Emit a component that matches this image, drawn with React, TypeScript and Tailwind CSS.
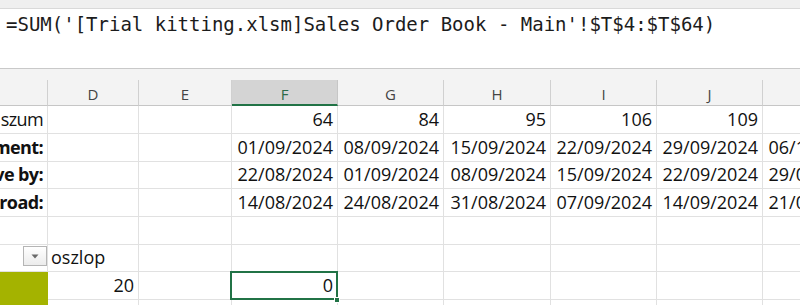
import React from "react";

const cols = ["C", "D", "E", "F", "G", "H", "I", "J", "K"];

type Cell = { t?: string; align?: "l" | "r"; bold?: boolean; label?: boolean };

const dates2 = ["01/09/2024", "08/09/2024", "15/09/2024", "22/09/2024", "29/09/2024", "06/10/2024"];
const dates3 = ["22/08/2024", "01/09/2024", "08/09/2024", "15/09/2024", "22/09/2024", "29/09/2024"];
const dates4 = ["14/08/2024", "24/08/2024", "31/08/2024", "07/09/2024", "14/09/2024", "21/09/2024"];
const nums = ["64", "84", "95", "106", "109", ""];

function rowFrom(label: string, bold: boolean, vals: string[]): Cell[] {
  return [
    { t: label, align: "r", bold, label: true },
    {},
    {},
    ...vals.map((v) => ({ t: v, align: "r" as const })),
  ];
}

const rows: { h: string; cells: Cell[] }[] = [
  { h: "h-[28px]", cells: rowFrom("szum", false, nums) },
  { h: "h-[28px]", cells: rowFrom("ment:", true, dates2) },
  { h: "h-[27px]", cells: rowFrom("ve by:", true, dates3) },
  { h: "h-[28px]", cells: rowFrom("road:", true, dates4) },
  { h: "h-[28px]", cells: rowFrom("", false, ["", "", "", "", "", ""]) },
];

const gridCols =
  "grid grid-cols-[48px_91px_93px_106px_106px_107px_106px_106px_106px]";

export default function App() {
  return (
    <div
      className="w-[800px] h-[305px] overflow-hidden bg-white text-[#111]"
      style={{ fontFamily: "'Open Sans', 'Noto Sans', sans-serif" }}
    >
      {/* top strip */}
      <div className="h-[9px] bg-[#efefef] border-b border-[#d9d9d9]" />
      {/* formula bar */}
      <div className="h-[60px] bg-white border-b border-[#c9c9c9] pl-[6px] pt-[4px]">
        <div
          className="text-[19px] leading-[22px] text-[#1c1c1c] whitespace-nowrap"
          style={{ fontFamily: "'DejaVu Sans Mono', 'Liberation Mono', monospace" }}
        >
          =SUM('[Trial kitting.xlsm]Sales Order Book - Main'!$T$4:$T$64)
        </div>
      </div>
      {/* gap */}
      <div className="h-[11px] bg-[#f3f3f3]" />
      {/* column headers */}
      <div className={`${gridCols} h-[26px] bg-[#f3f3f3]`}>
        {cols.map((c) => (
          <div
            key={c}
            className={
              c === "F"
                ? "flex items-end justify-center bg-[#d4d4d4] border-r border-[#c6c6c6] border-b-2 border-b-[#217346] text-[#2b6a47] text-[15px] leading-[18px] pb-[1px]"
                : "flex items-end justify-center border-b border-[#c6c6c6] border-r border-r-[#d0d0d0] text-[#444] text-[15px] leading-[18px] pb-[2px]"
            }
          >
            {c === "C" || c === "K" ? "" : c}
          </div>
        ))}
      </div>
      {/* data rows */}
      {rows.map((r, ri) => (
        <div key={ri} className={`${gridCols} ${r.h}`}>
          {r.cells.map((cell, ci) => (
            <div
              key={ci}
              className={`flex items-end overflow-hidden whitespace-nowrap border-r border-b border-[#e1e1e1] text-[18px] leading-[24px] pb-[2px] ${
                cell.align === "r" ? "justify-end pr-[4px]" : "justify-start pl-[3px]"
              } ${cell.bold ? "font-bold" : ""} ${cell.label ? "tracking-[-0.6px]" : ""}`}
            >
              {cell.t}
            </div>
          ))}
        </div>
      ))}
      {/* row 6: filter + oszlop */}
      <div className={`${gridCols} h-[27px]`}>
        <div className="flex justify-end items-start border-r border-b border-[#e1e1e1]">
          <div className="w-[24px] h-[20px] mt-[1px] border border-[#b5b5b5] bg-gradient-to-b from-[#ffffff] to-[#ececec] flex items-center justify-center">
            <svg width="8" height="5" viewBox="0 0 8 5">
              <path d="M0.5 0.5 L7.5 0.5 L4 4.5 Z" fill="#6a6a6a" />
            </svg>
          </div>
        </div>
        <div className="flex items-end justify-start pl-[3px] border-r border-b border-[#e1e1e1] text-[18px] leading-[24px] pb-[2px] whitespace-nowrap">
          oszlop
        </div>
        {cols.slice(2).map((c) => (
          <div key={c} className="border-r border-b border-[#e1e1e1]" />
        ))}
      </div>
      {/* row 7 */}
      <div className={`${gridCols} h-[28px]`}>
        <div className="bg-[#a4b300]" />
        <div className="flex items-end justify-end pr-[4px] border-r border-b border-[#e1e1e1] text-[18px] leading-[24px] pb-[2px]">
          20
        </div>
        <div className="border-r border-b border-[#e1e1e1]" />
        <div className="relative flex items-end justify-end pr-[4px] border-r border-b border-[#e1e1e1] text-[18px] leading-[24px] pb-[2px]">
          0
          <div className="absolute left-[-2px] top-[-1px] right-[-1px] bottom-[-1px] border-2 border-[#217346]" />
          <div className="absolute right-[-3px] bottom-[-4px] w-[6px] h-[6px] bg-[#217346] border border-white" />
        </div>
        {cols.slice(4).map((c) => (
          <div key={c} className="border-r border-b border-[#e1e1e1]" />
        ))}
      </div>
      {/* row 8 partial */}
      <div className={`${gridCols} h-[28px]`}>
        <div className="bg-[#a4b300]" />
        {cols.slice(1).map((c) => (
          <div key={c} className="border-r border-b border-[#e1e1e1]" />
        ))}
      </div>
    </div>
  );
}
